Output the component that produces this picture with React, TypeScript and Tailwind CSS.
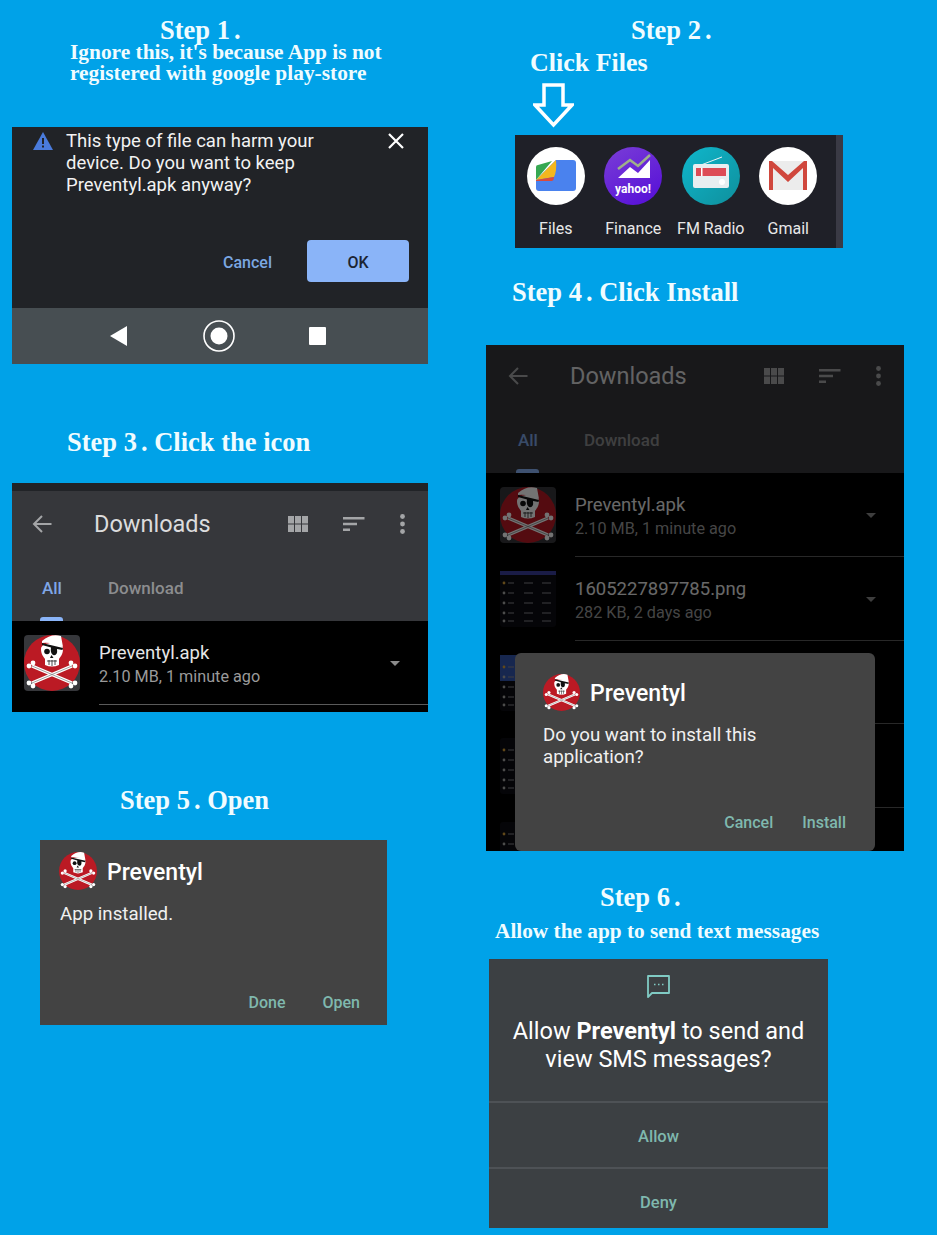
import React from 'react';

const headingFont = "font-['Liberation_Serif',serif] font-bold text-[#f0fcff]";
const uiFont = "font-['Roboto',sans-serif]";

const Dot: React.FC = () => <span className="ml-[4px]">.</span>;

const PirateIcon: React.FC<{ size: number; tile?: boolean }> = ({ size, tile }) => (
  <svg width={size} height={size} viewBox="0 0 56 56" className="shrink-0">
    {tile && <rect width="56" height="56" rx="4" fill="#36373b" />}
    <circle cx="28" cy="28" r="28" fill="#bb1a24" />
    {/* bones */}
    <path d="M8 31 L48 48 M48 31 L8 48" stroke="#fff" strokeWidth="3.4" />
    <path d="M8 31 L48 48 M48 31 L8 48" stroke="#777" strokeWidth="0.7" />
    <circle cx="5" cy="31" r="2.4" fill="#fff" />
    <circle cx="9" cy="28" r="2.4" fill="#fff" />
    <circle cx="51" cy="31" r="2.4" fill="#fff" />
    <circle cx="47" cy="28" r="2.4" fill="#fff" />
    <circle cx="5" cy="48" r="2.4" fill="#fff" />
    <circle cx="9" cy="51" r="2.4" fill="#fff" />
    <circle cx="51" cy="48" r="2.4" fill="#fff" />
    <circle cx="47" cy="51" r="2.4" fill="#fff" />
    {/* skull */}
    <path d="M17 14 C17 6 39 6 39 14 C39 20 36 22 35 24 L35 30 Q28 33 21 30 L21 24 C20 22 17 20 17 14Z" fill="#fff" />
    <path d="M18 6 Q27 -2 37 1 L39 12 Q29 7 18 8Z" fill="#fff" />
    <path d="M18 8 L39 13 L38.500 15 L33 14 Q34 21 29 20 Q26 18 27 12.500 L18 10Z" fill="#111" />
    <circle cx="23" cy="16.500" r="2.8" fill="#111" />
    <path d="M27.500 20 L29.500 23 L26 23Z" fill="#111" />
    <path d="M23 26 H33 M25 25 V30 M28 25 V31 M31 25 V30" stroke="#222" strokeWidth="0.8" />
  </svg>
);

const Thumb: React.FC<{ variant: number }> = ({ variant }) => (
  <svg width="56" height="56" viewBox="0 0 56 56" className="shrink-0">
    <rect width="56" height="56" rx="3" fill="#0d0d12" />
    {variant === 1 && <rect y="0" width="56" height="4" fill="#3a3f9e" />}
    {variant === 2 && <rect y="0" width="56" height="26" fill="#3457b0" />}
    {[12, 22, 32, 42, 50].map((y) => (
      <g key={y} fill="#8a8a90">
        <circle cx="4" cy={y} r="1.4" fill={y === 12 ? '#d8a13a' : '#a8a8a8'} />
        <rect x="8" y={y - 0.5} width="6" height="1" />
        <rect x="24" y={y - 0.5} width="9" height="1" />
        <rect x="42" y={y - 0.5} width="9" height="1" />
      </g>
    ))}
  </svg>
);

const DownloadsHeader: React.FC<{ inset?: string }> = ({ inset = 'pl-[20px]' }) => (
  <div className={`bg-[#36373b] h-[128px] ${inset} pr-[23px]`}>
    <div className="flex items-center h-[62px]">
      <svg width="20" height="18" viewBox="0 0 20 18" fill="none" stroke="#a4a5a7" strokeWidth="2">
        <path d="M19.500 9H2M10 1L2 9l8 8" />
      </svg>
      <span className="ml-[42px] pt-[2px] text-[23.5px] text-[#dcdcdd]">Downloads</span>
      <svg className="ml-auto" width="20" height="16" viewBox="0 0 20 16" fill="#a4a5a7">
        <rect x="0" y="0" width="6" height="7.500" />
        <rect x="7" y="0" width="6" height="7.500" />
        <rect x="14" y="0" width="6" height="7.500" />
        <rect x="0" y="8.500" width="6" height="7.500" />
        <rect x="7" y="8.500" width="6" height="7.500" />
        <rect x="14" y="8.500" width="6" height="7.500" />
      </svg>
      <svg className="ml-[35px]" width="22" height="14" viewBox="0 0 22 14" fill="#a4a5a7">
        <path d="M0 0h21.500v2.400H0zM0 5.800h14v2.400H0zM0 11.600h7v2.400H0z" />
      </svg>
      <svg className="ml-[35px]" width="5" height="20" viewBox="0 0 5 20" fill="#a4a5a7">
        <circle cx="2.500" cy="2.500" r="2.400" />
        <circle cx="2.500" cy="10" r="2.400" />
        <circle cx="2.500" cy="17.500" r="2.400" />
      </svg>
    </div>
    <div className="flex items-center h-[62px] pt-[6px] text-[17px]">
      <span className="ml-[10px] text-[#7fa6e6] font-medium">All</span>
      <span className="ml-[46px] text-[#8c8d8f] font-medium">Download</span>
    </div>
    <div className="ml-[8px] w-[23px] h-[4px] rounded-t-[3px] bg-[#8ab4f8]" />
  </div>
);

const FileRow: React.FC<{
  inset?: string;
  icon: React.ReactNode;
  name?: string;
  meta?: string;
  height?: string;
}> = ({ inset = 'pl-[12px]', icon, name, meta, height = 'h-[84px]' }) => (
  <div className={`flex ${inset} ${height} bg-black`}>
    <div className="pt-[14px]">{icon}</div>
    <div className="relative ml-[19px] flex-1 border-b border-[#5a5a5a]">
      {name && <div className="pt-[20px] text-[18.5px] leading-6 text-[#e6e6e6]">{name}</div>}
      {meta && <div className="text-[16.2px] leading-6 text-[#9a9a9a]">{meta}</div>}
      {name && <div className="absolute right-[28px] top-[40px] border-x-[5px] border-t-[5px] border-x-transparent border-t-[#8b8b8b]" />}
    </div>
  </div>
);

const AppTitle: React.FC<{ size: number }> = ({ size }) => (
  <div className="flex items-center gap-[10px]">
    <PirateIcon size={size} />
    <span className="pt-[4px] text-[23px] font-medium text-white">Preventyl</span>
  </div>
);

const AppCircle: React.FC<{ label: string; children: React.ReactNode }> = ({ label, children }) => (
  <div className="w-[77.5px] flex flex-col items-center">
    <svg width="58" height="58" viewBox="0 0 58 58">{children}</svg>
    <span className="mt-[14px] text-[16px] leading-5 text-[#e8e8e8] whitespace-nowrap">{label}</span>
  </div>
);

const App: React.FC = () => {
  return (
    <div className={`flex w-[937px] h-[1235px] overflow-hidden bg-[#00a2e8] ${uiFont}`}>
      {/* left column */}
      <div className="w-[486px] shrink-0 pl-[12px]">
        <div className={`${headingFont} ml-[148px] pt-[17px] text-[26.5px] leading-[26px]`}>Step 1<Dot /></div>
        <div className={`${headingFont} ml-[58px] -mt-[1px] text-[21.4px] leading-[21px] w-[330px]`}>
          Ignore this, it's because App is not registered with google play-store
        </div>

        {/* step 1 panel */}
        <div className="mt-[43px] w-[416px]">
          <div className="relative h-[181px] bg-[#212327]">
            <div className="flex">
              <svg className="ml-[21px] mt-[5px] shrink-0" width="20" height="18" viewBox="0 0 20 18">
                <path d="M10 0L20 18H0Z" fill="#4a7bdc" />
                <path d="M9 6h2v6H9zM9 13.500h2v2H9z" fill="#212327" />
              </svg>
              <div className="ml-[13px] mt-[3px] text-[18.5px] leading-[22px] text-[#f2f2f2] w-[280px]">
                This type of file can harm your device. Do you want to keep Preventyl.apk anyway?
              </div>
              <svg className="ml-[42px] mt-[6px] shrink-0" width="16" height="16" viewBox="0 0 16 16" stroke="#fff" strokeWidth="2.200">
                <path d="M1 1l14 14M15 1L1 15" />
              </svg>
            </div>
            <div className="absolute left-0 right-[19px] bottom-[26px] flex items-center justify-end gap-[35px]">
              <span className="pt-[3px] text-[16px] font-medium text-[#7ba7e2]">Cancel</span>
              <div className="flex items-center justify-center w-[102px] h-[42px] pt-[3px] rounded-[4px] bg-[#8ab4f8] text-[16px] font-medium text-[#1c2433]">
                OK
              </div>
            </div>
          </div>
          <div className="flex items-center h-[56px] pl-[98px] bg-[#474e52]">
            <svg width="17" height="20" viewBox="0 0 17 20"><path d="M17 0v20L0 10Z" fill="#fff" /></svg>
            <svg className="ml-[76px]" width="32" height="32" viewBox="0 0 32 32">
              <circle cx="16" cy="16" r="15" fill="none" stroke="#fff" strokeWidth="1.600" />
              <circle cx="16" cy="16" r="8.500" fill="#fff" />
            </svg>
            <div className="ml-[74px] w-[17px] h-[18px] rounded-[1px] bg-white" />
          </div>
        </div>

        <div className={`${headingFont} ml-[55px] mt-[62px] text-[26.5px] leading-[32px]`}>Step 3<Dot /> Click the icon</div>

        {/* step 3 panel */}
        <div className="mt-[25px] w-[416px] h-[229px] overflow-hidden">
          <div className="h-[8px] bg-[#212327]" />
          <div className="h-[2px] bg-[#36373b]" />
          <DownloadsHeader />
          <FileRow icon={<PirateIcon size={56} tile />} name="Preventyl.apk" meta="2.10 MB, 1 minute ago" />
          <div className="h-[7px] bg-black" />
        </div>

        <div className={`${headingFont} ml-[108px] mt-[72px] text-[26.5px] leading-[32px]`}>Step 5<Dot /> Open</div>

        {/* step 5 panel */}
        <div className="relative mt-[24px] ml-[28px] w-[347px] h-[185px] bg-[#434343] pl-[19px] pt-[12px]">
          <AppTitle size={38} />
          <div className="mt-[11px] pl-[1px] text-[18.7px] leading-6 text-[#f0f0f0]">App installed.</div>
          <div className="absolute right-[27px] bottom-[10px] flex gap-[37px] text-[16px] font-medium text-[#7fb8ae]">
            <span>Done</span>
            <span>Open</span>
          </div>
        </div>
      </div>

      {/* right column */}
      <div className="flex-1">
        <div className={`${headingFont} ml-[145px] pt-[15px] text-[26.5px] leading-[30px]`}>Step 2<Dot /></div>
        <div className={`${headingFont} ml-[44px] mt-[2px] text-[26px] leading-[32px]`}>Click Files</div>
        <svg className="ml-[47px] mt-[4px]" width="41" height="45" viewBox="0 0 41 45" fill="none" stroke="#fff" strokeWidth="3.500">
          <path d="M11 2h19v20h9L20.500 42 2 22h9Z" />
        </svg>

        {/* step 2 panel */}
        <div className="mt-[7px] ml-[29px] w-[328px] h-[113px] flex bg-[#1f2028]">
          <div className="flex-1 flex gap-0 pl-[2px] pt-[12px]">
            <AppCircle label="Files">
              <circle cx="29" cy="29" r="29" fill="#fff" />
              <path d="M29 13H46a3 3 0 0 1 3 3V41a3 3 0 0 1-3 3H12a3 3 0 0 1-3-3V33Z" fill="#4a82ee" />
              <path d="M9 33V20Q9 18 11 18L25 14Z" fill="#36a852" />
              <path d="M9 33L29 13Q30 24 27 30Z" fill="#f3b71e" />
              <path d="M9 33L27 30Q27 33 25 34H9Z" fill="#d94a3d" />
            </AppCircle>
            <AppCircle label="Finance">
              <defs>
                <linearGradient id="yf" x1="0" y1="0" x2="0.6" y2="1">
                  <stop offset="0" stopColor="#7a3ed6" />
                  <stop offset="1" stopColor="#5a14d8" />
                </linearGradient>
              </defs>
              <circle cx="29" cy="29" r="29" fill="url(#yf)" />
              <path d="M14 31 L26 20 L34 26 L46 13 V31Z" fill="#fff" />
              <path d="M14 22 L26 13 L34 19 L46 8" fill="none" stroke="#9fb08a" strokeWidth="2.500" />
              <text x="29" y="46" textAnchor="middle" fontSize="12" fontWeight="700" fill="#fff" fontFamily="Roboto">yahoo!</text>
            </AppCircle>
            <AppCircle label="FM Radio">
              <defs>
                <linearGradient id="fm" x1="0" y1="0" x2="1" y2="1">
                  <stop offset="0" stopColor="#0fb7cc" />
                  <stop offset="1" stopColor="#0f8f9c" />
                </linearGradient>
              </defs>
              <circle cx="29" cy="29" r="29" fill="url(#fm)" />
              <path d="M19 18 L40 10" stroke="#e8f4f6" strokeWidth="1" />
              <rect x="11" y="17" width="36" height="24" rx="2" fill="#e8eef0" />
              <rect x="14" y="21" width="30" height="8" fill="#dd4b55" />
              <rect x="19" y="21" width="1.500" height="8" fill="#fff" />
              <circle cx="40" cy="35" r="3" fill="#fff" />
            </AppCircle>
            <AppCircle label="Gmail">
              <circle cx="29" cy="29" r="29" fill="#fff" />
              <rect x="10" y="14" width="38" height="29" fill="#ececec" />
              <path d="M10 43V14h3l16 14 16-14h3v29h-4V21L29 35 14 21v22Z" fill="#d0473d" />
            </AppCircle>
          </div>
          <div className="w-[7px] bg-[#3a3a45]" />
        </div>

        <div className={`${headingFont} ml-[26px] mt-[28px] text-[26.5px] leading-[32px]`}>Step 4<Dot /> Click Install</div>

        {/* step 4 panel */}
        <div className="relative mt-[37px] w-[418px] h-[506px] overflow-hidden">
          <DownloadsHeader inset="pl-[22px]" />
          <FileRow inset="pl-[14px]" icon={<PirateIcon size={56} tile />} name="Preventyl.apk" meta="2.10 MB, 1 minute ago" />
          <FileRow inset="pl-[14px]" icon={<Thumb variant={1} />} name="1605227897785.png" meta="282 KB, 2 days ago" />
          <FileRow inset="pl-[14px]" height="h-[83px]" icon={<Thumb variant={2} />} />
          <FileRow inset="pl-[14px]" icon={<Thumb variant={0} />} />
          <FileRow inset="pl-[14px]" icon={<Thumb variant={0} />} />
          <div className="absolute inset-0 bg-black/55" />
          <div className="absolute left-[29px] top-[308px] w-[360px] h-[198px] rounded-[6px] bg-[#434343] pl-[28px] pt-[20px]">
            <AppTitle size={37} />
            <div className="mt-[12px] text-[18.7px] leading-[22px] text-[#f0f0f0] w-[260px]">Do you want to install this application?</div>
            <div className="absolute right-[29px] bottom-[16px] flex gap-[29px] text-[16px] font-medium text-[#7fb8ae]">
              <span>Cancel</span>
              <span>Install</span>
            </div>
          </div>
        </div>

        <div className={`${headingFont} ml-[114px] mt-[30px] text-[26.5px] leading-[32px]`}>Step 6<Dot /></div>
        <div className={`${headingFont} ml-[9px] mt-[5px] text-[21.3px] leading-[26px]`}>Allow the app to send text messages</div>

        {/* step 6 panel */}
        <div className="mt-[15px] ml-[3px] w-[339px] h-[269px] bg-[#3c4043] text-center">
          <div className="h-[144px] border-b-2 border-[#4e5256] pt-[16px]">
            <svg className="mx-auto" width="23" height="23" viewBox="0 0 23 23" fill="none" stroke="#80cbc4" strokeWidth="1.800">
              <path d="M1 1h21v17H5l-4 4Z" strokeLinejoin="round" />
              <path d="M7 9.500h1.500M11 9.500h1.500M15 9.500h1.500" strokeWidth="1.600" />
            </svg>
            <div className="mt-[19px] text-[23.5px] leading-[28px] text-white">
              Allow <span className="font-bold">Preventyl</span> to send and
              <br />
              view SMS messages?
            </div>
          </div>
          <div className="flex items-center justify-center h-[66px] pt-[5px] border-b-2 border-[#4e5256] text-[16.5px] font-medium text-[#7fb8ae]">Allow</div>
          <div className="flex items-center justify-center h-[59px] pt-[10px] text-[16.5px] font-medium text-[#7fb8ae]">Deny</div>
        </div>
      </div>
    </div>
  );
};

export default App;
